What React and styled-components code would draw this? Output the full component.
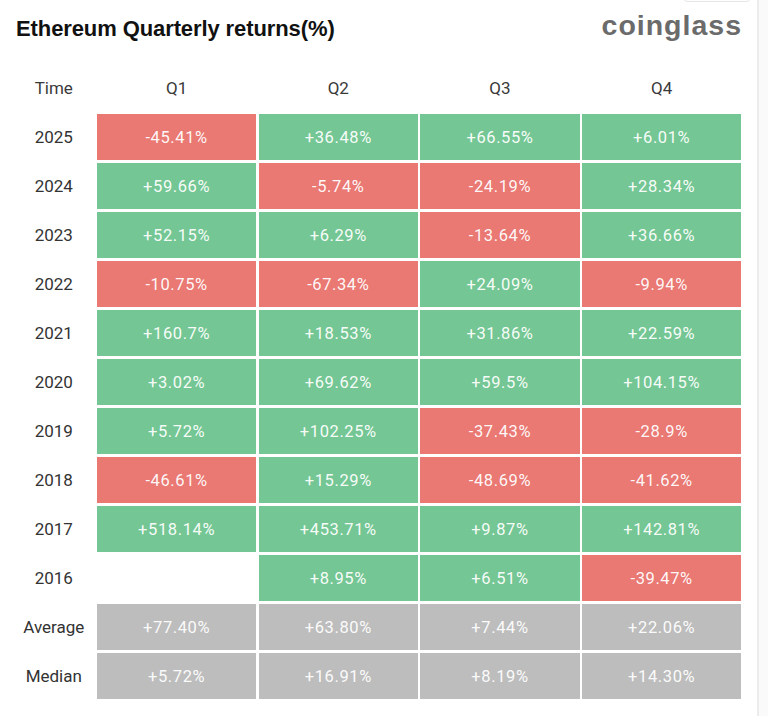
import React from 'react';
import styled, { createGlobalStyle } from 'styled-components';

const GlobalStyle = createGlobalStyle`
  html, body {
    margin: 0;
    padding: 0;
    background: #ffffff;
  }
  body {
    font-family: Roboto, "Liberation Sans", Arial, sans-serif;
  }
`;

const Page = styled.div`
  display: flex;
  width: 768px;
  height: 716px;
  overflow: hidden;
  background: #fafafa;
`;

const Panel = styled.div`
  position: relative;
  width: 759px;
  height: 100%;
  background: #ffffff;
  border-right: 2px solid #ececec;
  box-sizing: border-box;
`;

// cut-off button peeking in at the top edge
const TopButton = styled.div`
  position: absolute;
  top: -30px;
  left: 682px;
  width: 70px;
  height: 32px;
  border: 1px solid #e6e6e6;
  border-radius: 6px;
  box-sizing: border-box;
`;

const Header = styled.div`
  display: flex;
  align-items: center;
  justify-content: space-between;
  height: 52px;
  padding: 0 15px 0 16px;
`;

const Title = styled.h1`
  margin: 6px 0 0;
  font-family: "Liberation Sans", Arial, sans-serif;
  font-size: 22px;
  font-weight: 700;
  letter-spacing: -0.1px;
  color: #111111;
`;

const Logo = styled.div`
  font-family: "Liberation Sans", Arial, sans-serif;
  font-size: 28.5px;
  font-weight: 700;
  letter-spacing: 1px;
  color: #6b6b6b;
  margin-top: -1px;
`;

const Grid = styled.div`
  display: grid;
  grid-template-columns: 81.5px repeat(4, 159.2px);
  grid-auto-rows: 46px;
  column-gap: 2.5px;
  row-gap: 3px;
  padding-left: 13px;
  margin-top: 13px;
`;

const Label = styled.div`
  display: flex;
  align-items: center;
  justify-content: center;
  font-size: 17px;
  color: ${p => (p.$head ? '#3a3a3a' : '#333333')};
`;

const colors = {
  up: '#74c794',
  down: '#ea7873',
  stat: '#bdbdbd',
  empty: 'transparent',
};

const Cell = styled.div`
  display: flex;
  align-items: center;
  justify-content: center;
  background: ${p => colors[p.$kind]};
  color: rgba(255, 255, 255, 0.96);
  font-size: 16.5px;
  letter-spacing: 0.6px;
`;

const rows = [
  ['2025', '-45.41%', '+36.48%', '+66.55%', '+6.01%'],
  ['2024', '+59.66%', '-5.74%', '-24.19%', '+28.34%'],
  ['2023', '+52.15%', '+6.29%', '-13.64%', '+36.66%'],
  ['2022', '-10.75%', '-67.34%', '+24.09%', '-9.94%'],
  ['2021', '+160.7%', '+18.53%', '+31.86%', '+22.59%'],
  ['2020', '+3.02%', '+69.62%', '+59.5%', '+104.15%'],
  ['2019', '+5.72%', '+102.25%', '-37.43%', '-28.9%'],
  ['2018', '-46.61%', '+15.29%', '-48.69%', '-41.62%'],
  ['2017', '+518.14%', '+453.71%', '+9.87%', '+142.81%'],
  ['2016', '', '+8.95%', '+6.51%', '-39.47%'],
];

const stats = [
  ['Average', '+77.40%', '+63.80%', '+7.44%', '+22.06%'],
  ['Median', '+5.72%', '+16.91%', '+8.19%', '+14.30%'],
];

function kindOf(v) {
  if (!v) return 'empty';
  return v.startsWith('-') ? 'down' : 'up';
}

export default function App() {
  return (
    <>
      <GlobalStyle />
      <Page>
        <Panel>
          <TopButton />
          <Header>
            <Title>Ethereum Quarterly returns(%)</Title>
            <Logo>coinglass</Logo>
          </Header>
          <Grid>
            <Label $head>Time</Label>
            {['Q1', 'Q2', 'Q3', 'Q4'].map(q => (
              <Label $head key={q}>{q}</Label>
            ))}
            {rows.map(([year, ...vals]) => (
              <React.Fragment key={year}>
                <Label>{year}</Label>
                {vals.map((v, i) => (
                  <Cell key={i} $kind={kindOf(v)}>{v}</Cell>
                ))}
              </React.Fragment>
            ))}
            {stats.map(([name, ...vals]) => (
              <React.Fragment key={name}>
                <Label>{name}</Label>
                {vals.map((v, i) => (
                  <Cell key={i} $kind="stat">{v}</Cell>
                ))}
              </React.Fragment>
            ))}
          </Grid>
        </Panel>
      </Page>
    </>
  );
}
